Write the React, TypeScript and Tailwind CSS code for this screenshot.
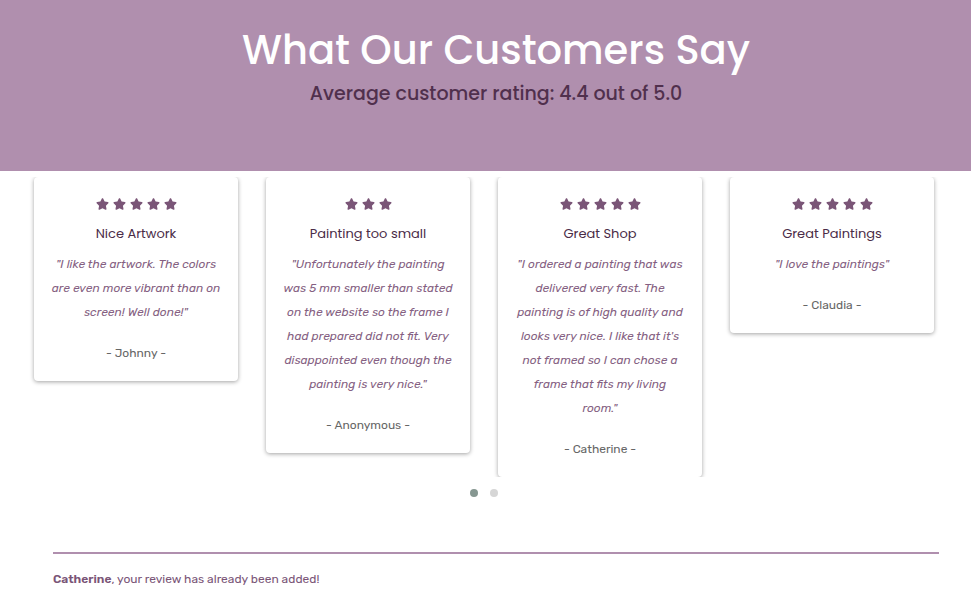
type Review = { stars: number; title: string; lines: string[]; author: string };

const reviews: Review[] = [
  {
    stars: 5,
    title: "Nice Artwork",
    lines: ['"I like the artwork. The colors', "are even more vibrant than on", 'screen! Well done!"'],
    author: "Johnny",
  },
  {
    stars: 3,
    title: "Painting too small",
    lines: [
      '"Unfortunately the painting',
      "was 5 mm smaller than stated",
      "on the website so the frame I",
      "had prepared did not fit. Very",
      "disappointed even though the",
      'painting is very nice."',
    ],
    author: "Anonymous",
  },
  {
    stars: 5,
    title: "Great Shop",
    lines: [
      '"I ordered a painting that was',
      "delivered very fast. The",
      "painting is of high quality and",
      "looks very nice. I like that it's",
      "not framed so I can chose a",
      "frame that fits my living",
      'room."',
    ],
    author: "Catherine",
  },
  { stars: 5, title: "Great Paintings", lines: ['"I love the paintings"'], author: "Claudia" },
];

function Star() {
  return (
    <svg viewBox="0 0 576 512" className="h-3 w-[13px] fill-[#7a5577]" aria-hidden="true">
      <path d="M259.3 17.8L194 150.2 47.9 171.5c-26.2 3.8-36.7 36.1-17.7 54.6l105.7 103-25 145.5c-4.5 26.3 23.2 46 46.4 33.7L288 439.6l130.7 68.7c23.2 12.2 50.9-7.4 46.4-33.7l-25-145.5 105.7-103c19-18.5 8.5-50.8-17.7-54.6L382 150.2 316.7 17.8c-11.7-23.6-45.6-23.9-57.4 0z" />
    </svg>
  );
}

function Card({ review }: { review: Review }) {
  return (
    <article className="rounded bg-white px-3 py-4 text-center text-xs shadow-[0_1px_4px_rgba(0,0,0,0.37)]">
      <div
        className="flex h-[22px] items-center justify-center gap-1"
        role="img"
        aria-label={`${review.stars} stars`}
      >
        {Array.from({ length: review.stars }, (_, i) => (
          <Star key={i} />
        ))}
      </div>
      <h2 className="mt-[7px] font-['Poppins','Inter',sans-serif] text-[13px] leading-6 text-[#4a2c47]">
        {review.title}
      </h2>
      <p className="mt-1.5 leading-6 whitespace-nowrap text-[#855f82] italic">
        {review.lines.map((line) => (
          <span key={line} className="block">
            {line}
          </span>
        ))}
      </p>
      <p className="mt-[17px] leading-6 text-[#666666]">- {review.author} -</p>
    </article>
  );
}

export default function App() {
  return (
    <div className="bg-white font-['Rubik','Inter',sans-serif]">
      <header className="bg-[#b08fae] pt-5 pr-8 pb-16 pl-[53px] text-center font-['Poppins','Inter',sans-serif] font-medium">
        <h1 className="text-[40px] leading-[60px] text-white">What Our Customers Say</h1>
        <p className="text-[19px] leading-[27px] text-[#50304d]">Average customer rating: 4.4 out of 5.0</p>
      </header>
      <main>
        <section className="mt-1.5 mr-[23px] ml-5">
          <div className="grid grid-cols-4 items-start gap-7 overflow-hidden px-3.5">
            {reviews.map((review) => (
              <Card key={review.author} review={review} />
            ))}
          </div>
          <div className="mt-3 flex justify-center gap-3">
            <button type="button" aria-label="Page 1" className="size-2 rounded-full bg-[#869791]" />
            <button type="button" aria-label="Page 2" className="size-2 rounded-full bg-[#d6d6d6]" />
          </div>
        </section>
        <section className="mt-[55px] mr-8 ml-[53px] border-t-2 border-[#b08fae] pt-[13px]">
          <p className="text-xs leading-6 text-[#7a5577]">
            <strong className="font-semibold">Catherine</strong>, your review has already been added!
          </p>
        </section>
      </main>
    </div>
  );
}
